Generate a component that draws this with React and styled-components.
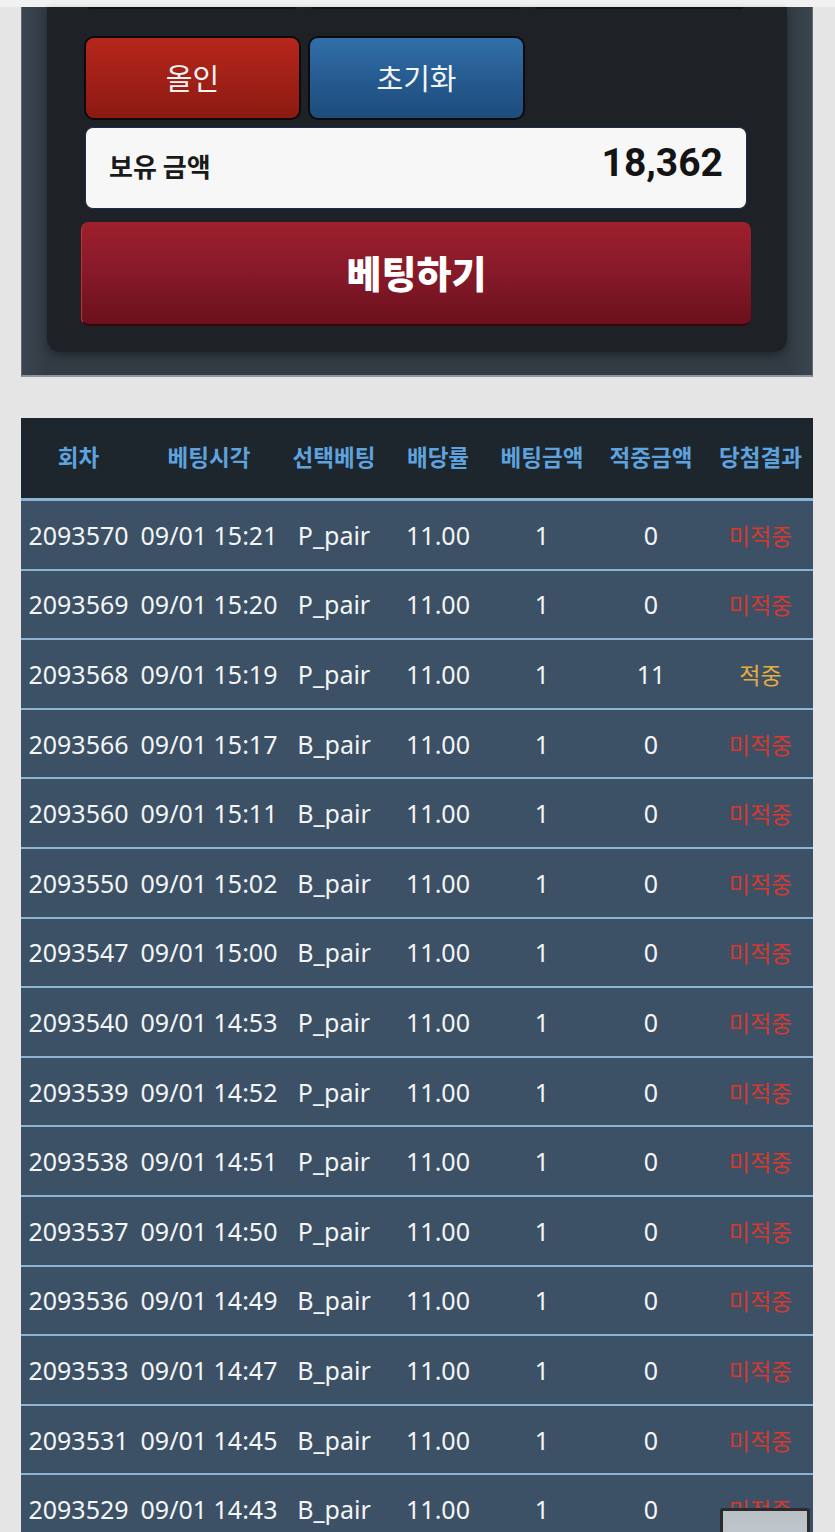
import React from "react";
import styled, { createGlobalStyle } from "styled-components";

const GlobalStyle = createGlobalStyle`
  html, body {
    margin: 0;
    padding: 0;
    background: #e5e5e5;
  }
  body {
    font-family: "Noto Sans", "Noto Sans CJK KR", sans-serif;
  }
`;

const Page = styled.div`
  display: flex;
  flex-direction: column;
  padding: 0 22px 40px 21px;
`;

const TopStrip = styled.div`
  height: 7px;
  background: #f1f1f1;
`;

const Outer = styled.div`
  background: linear-gradient(90deg, #3b454f 0%, #333c45 3%, #333c45 97%, #3b454f 100%);
  border-left: 1px solid #5f6a74;
  border-right: 1px solid #5f6a74;
  border-bottom: 2px solid #8a959f;
  padding: 0 25px 23px 25px;
`;

const Inner = styled.div`
  background: #1e2226;
  border-radius: 0 0 14px 14px;
  box-shadow: 0 4px 8px rgba(0, 0, 0, 0.35);
  padding: 0 36px 26px 34px;
  display: flex;
  flex-direction: column;
`;

const CutRow = styled.div`
  display: flex;
  gap: 15px;
  padding: 0 8px 0 7px;
  margin-bottom: 27px;
`;

const CutButton = styled.div`
  width: 209px;
  height: 2px;
  background: #101316;
  border-radius: 0 0 4px 4px;
`;

const ButtonRow = styled.div`
  display: flex;
  gap: 7px;
  padding-left: 3px;
  margin-bottom: 7px;
`;

const SmallButton = styled.button`
  box-sizing: border-box;
  width: 217px;
  height: 84px;
  border: 2px solid #0b0b0d;
  border-radius: 10px;
  background: ${({ $tone }) =>
    $tone === "blue"
      ? "linear-gradient(180deg, #316fa9 0%, #24588c 60%, #1d4c7c 100%)"
      : "linear-gradient(180deg, #b6261b 0%, #9d1f16 60%, #8c1a12 100%)"};
  color: #f4f4f4;
  font-family: "Noto Sans CJK KR", sans-serif;
  font-size: 29px;
  font-weight: 400;
  display: flex;
  align-items: center;
  justify-content: center;
  padding: 0 0 3px 0;
`;

const BalanceBox = styled.div`
  box-sizing: border-box;
  margin: 0 4px 13px 4px;
  height: 82px;
  background: #f7f7f7;
  border: 1px solid #1b2a55;
  border-radius: 8px;
  display: flex;
  align-items: center;
  justify-content: space-between;
  padding: 0 23px 10px 23px;
`;

const BalanceLabel = styled.span`
  font-family: "Noto Sans CJK KR", sans-serif;
  font-size: 26px;
  font-weight: 700;
  color: #1a1a1a;
  margin-top: 4px;
`;

const BalanceValue = styled.span`
  font-family: Roboto, "Noto Sans", sans-serif;
  font-size: 39px;
  font-weight: 700;
  color: #141414;
`;

const BetButton = styled.button`
  box-sizing: border-box;
  height: 104px;
  border: none;
  border-left: 1px solid #c2303a;
  border-bottom: 2px solid #3a070c;
  border-radius: 8px;
  background: linear-gradient(180deg, #9e202c 0%, #86192a 50%, #6b111c 100%);
  color: #ffffff;
  font-family: "Noto Sans CJK KR", sans-serif;
  font-size: 38px;
  font-weight: 900;
  display: flex;
  align-items: center;
  justify-content: center;
  padding: 0 0 4px 0;
`;

const Table = styled.table`
  margin-top: 41px;
  width: 100%;
  border-collapse: collapse;
  table-layout: fixed;
`;

const HeadCell = styled.th`
  height: 76px;
  background: #1d252d;
  color: #5ea2de;
  font-family: "Noto Sans CJK KR", sans-serif;
  font-size: 22.5px;
  font-weight: 700;
  text-align: center;
  padding: 0 0 4px 0;
  border-bottom: 3px solid #8ab3d6;
  white-space: nowrap;
`;

const Row = styled.tr`
  background: #3c5165;
  border-bottom: 2px solid #8db3d4;
`;

const Cell = styled.td`
  height: 67.6px;
  padding: 0;
  text-align: center;
  color: ${({ $result }) =>
    $result === "win" ? "#e7ad3e" : $result === "lose" ? "#d6392f" : "#f3f5f7"};
  font-family: "Noto Sans", "Noto Sans CJK KR", sans-serif;
  font-size: ${({ $result }) => ($result ? "23px" : "25px")};
  white-space: nowrap;
`;

const ScrollTop = styled.div`
  position: fixed;
  left: 720px;
  bottom: -42px;
  width: 84px;
  height: 60px;
  border: 3px solid #2b2b2b;
  border-radius: 3px;
  background: linear-gradient(180deg, #b9c0c6 0%, #c9cfd4 100%);
`;

const columns = [
  { label: "회차", width: 115 },
  { label: "베팅시각", width: 146 },
  { label: "선택베팅", width: 104 },
  { label: "배당률", width: 104 },
  { label: "베팅금액", width: 104 },
  { label: "적중금액", width: 114 },
  { label: "당첨결과", width: 105 },
];

const bets = [
  ["2093570", "09/01 15:21", "P_pair", 0],
  ["2093569", "09/01 15:20", "P_pair", 0],
  ["2093568", "09/01 15:19", "P_pair", 11],
  ["2093566", "09/01 15:17", "B_pair", 0],
  ["2093560", "09/01 15:11", "B_pair", 0],
  ["2093550", "09/01 15:02", "B_pair", 0],
  ["2093547", "09/01 15:00", "B_pair", 0],
  ["2093540", "09/01 14:53", "P_pair", 0],
  ["2093539", "09/01 14:52", "P_pair", 0],
  ["2093538", "09/01 14:51", "P_pair", 0],
  ["2093537", "09/01 14:50", "P_pair", 0],
  ["2093536", "09/01 14:49", "B_pair", 0],
  ["2093533", "09/01 14:47", "B_pair", 0],
  ["2093531", "09/01 14:45", "B_pair", 0],
  ["2093529", "09/01 14:43", "B_pair", 0],
];

export default function App() {
  return (
    <>
      <GlobalStyle />
      <TopStrip />
      <Page>
        <Outer>
          <Inner>
            <CutRow>
              <CutButton />
              <CutButton />
              <CutButton />
            </CutRow>
            <ButtonRow>
              <SmallButton $tone="red">올인</SmallButton>
              <SmallButton $tone="blue">초기화</SmallButton>
            </ButtonRow>
            <BalanceBox>
              <BalanceLabel>보유 금액</BalanceLabel>
              <BalanceValue>18,362</BalanceValue>
            </BalanceBox>
            <BetButton>베팅하기</BetButton>
          </Inner>
        </Outer>

        <Table>
          <colgroup>
            {columns.map((c) => (
              <col key={c.label} style={{ width: c.width }} />
            ))}
          </colgroup>
          <thead>
            <tr>
              {columns.map((c) => (
                <HeadCell key={c.label}>{c.label}</HeadCell>
              ))}
            </tr>
          </thead>
          <tbody>
            {bets.map(([round, time, pick, win]) => (
              <Row key={round}>
                <Cell>{round}</Cell>
                <Cell>{time}</Cell>
                <Cell>{pick}</Cell>
                <Cell>11.00</Cell>
                <Cell>1</Cell>
                <Cell>{win}</Cell>
                <Cell $result={win > 0 ? "win" : "lose"}>
                  {win > 0 ? "적중" : "미적중"}
                </Cell>
              </Row>
            ))}
          </tbody>
        </Table>
      </Page>
      <ScrollTop />
    </>
  );
}
